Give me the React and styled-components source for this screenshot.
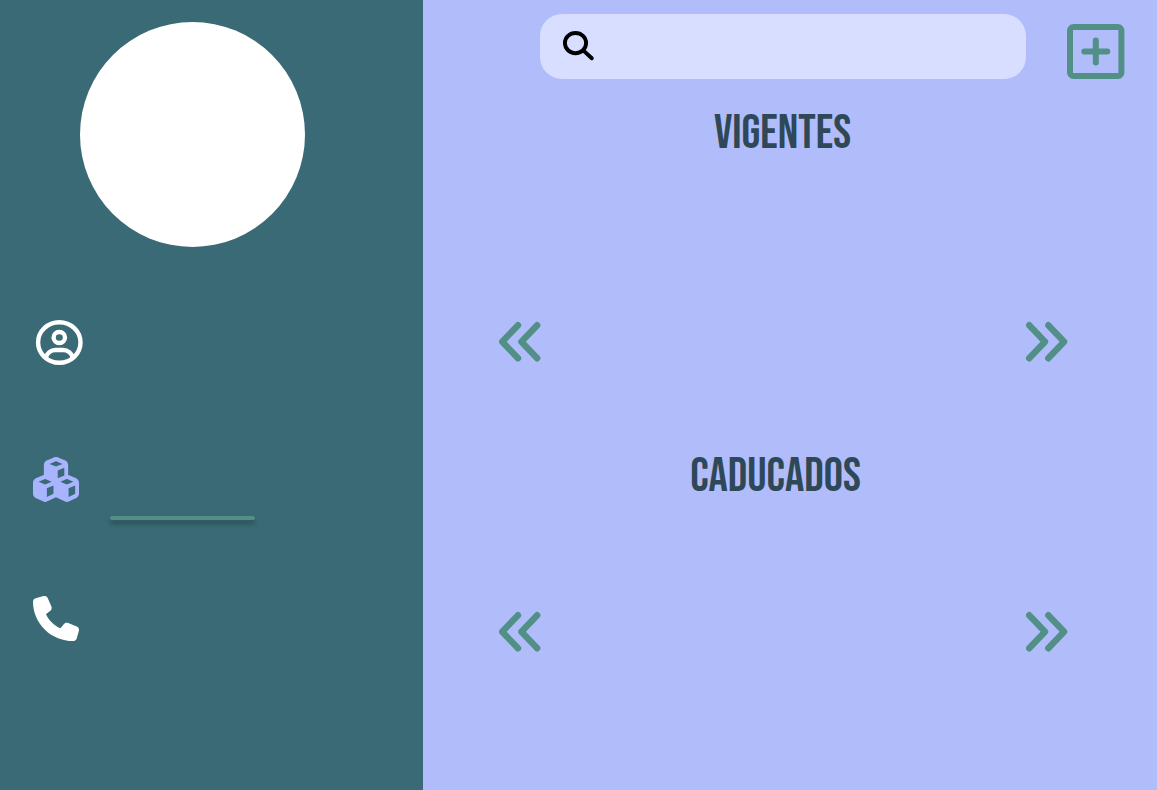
import React from "react";
import styled, { createGlobalStyle } from "styled-components";
import { FaCubes, FaPhone } from "react-icons/fa6";

const GlobalStyle = createGlobalStyle`
  * { box-sizing: border-box; }
  body {
    margin: 0;
    background: #b1bcfb;
    font-family: "Bebas Neue", "Liberation Sans Narrow", "Liberation Sans", sans-serif;
  }
`;

const Page = styled.div`
  display: grid;
  grid-template-columns: 423px minmax(0, 1fr);
  min-height: 100vh;
`;

const Sidebar = styled.aside`
  background: #396a75;
  padding: 22px 33px;
`;

const Avatar = styled.div`
  width: 225px;
  height: 225px;
  margin-left: 47px;
  border-radius: 50%;
  background: #fff;
`;

const Nav = styled.nav`
  display: flex;
  flex-direction: column;
  gap: 76px;
  margin-top: 71px;
`;

const NavLink = styled.a`
  display: flex;
  align-items: flex-start;
  gap: 31px;
  height: 63px;
  color: ${(p) => (p.$active ? "#a9b4ff" : "#fff")};

  svg {
    display: block;
    flex: none;
  }
`;

const CubesIcon = styled(FaCubes)`
  width: 46px;
  height: 45px;
`;

const PhoneIcon = styled(FaPhone)`
  width: 46px;
  height: 45px;
`;

const ActiveBar = styled.span`
  align-self: flex-end;
  width: 145px;
  height: 4px;
  border-radius: 2px;
  background: #518f87;
  box-shadow: 0 4px 4px rgba(0, 0, 0, 0.25);
`;

const Main = styled.main`
  background: #b1bcfb;
`;

const Toolbar = styled.header`
  display: flex;
  align-items: center;
  gap: 41px;
  padding: 14px 32px 0 117px;
`;

const SearchBox = styled.label`
  display: flex;
  align-items: center;
  gap: 16px;
  flex: 1;
  min-width: 0;
  height: 65px;
  padding: 0 22px;
  border-radius: 22px;
  background: #d8deff;

  svg { flex: none; }
`;

const SearchInput = styled.input`
  flex: 1;
  min-width: 0;
  height: 40px;
  border: 0;
  outline: 0;
  background: transparent;
  font: inherit;
  font-size: 24px;
  color: #2f4858;
`;

const IconButton = styled.button`
  display: block;
  flex: none;
  padding: 0;
  border: 0;
  background: none;
  color: #518f87;
  cursor: pointer;

  svg { display: block; }
`;

const AddButton = styled(IconButton)`
  align-self: flex-end;
`;

const Section = styled.section`
  display: flex;
  flex-direction: column;
  gap: ${(p) => p.$gap}px;
  padding: 26px 89px 59px 76px;
`;

const Title = styled.h2`
  margin: 0;
  padding-right: ${(p) => p.$inset}px;
  font-size: 48px;
  line-height: 58px;
  font-weight: 400;
  text-align: center;
  color: #2f4858;
`;

const Carousel = styled.div`
  display: flex;
  justify-content: space-between;
`;

const stroke = {
  fill: "none",
  stroke: "currentColor",
  strokeLinecap: "round",
  strokeLinejoin: "round",
};

function ProfileIcon() {
  return (
    <svg width="54" height="48" viewBox="0 0 54 48" {...stroke} strokeWidth="4.4" aria-hidden="true">
      <ellipse cx="26.3" cy="24.5" rx="21.2" ry="20.3" />
      <ellipse cx="26.3" cy="19.5" rx="5.7" ry="5.5" />
      <path d="M13 39C14.2 35.5 17.5 32 22.5 32H30.1C35 32 38.4 35.5 39.6 39" />
    </svg>
  );
}

function SearchIcon() {
  return (
    <svg width="33" height="32" viewBox="0 0 33 32" {...stroke} strokeWidth="3.9" aria-hidden="true">
      <ellipse cx="13.5" cy="12.1" rx="10.6" ry="10.1" />
      <path d="M21.5 19.6L29.8 27.3" />
    </svg>
  );
}

function AddIcon() {
  return (
    <svg width="58" height="55" viewBox="0 0 58 55" {...stroke} strokeWidth="6" aria-hidden="true">
      <rect x="3" y="3" width="51.4" height="49" rx="3.5" />
      <path d="M17.3 27.4H40.3M28.8 16.5V38.4" />
    </svg>
  );
}

function ArrowIcon({ forward }) {
  return (
    <svg width="42" height="42" viewBox="0 0 42 42" {...stroke} strokeWidth="6.4" aria-hidden="true">
      <path
        d={
          forward
            ? "M3.2 4.2L19 20.7L3.2 37.3M22.3 4.2L38.1 20.7L22.3 37.3"
            : "M19 4.2L3.2 20.7L19 37.3M38.2 4.2L22.4 20.7L38.2 37.3"
        }
      />
    </svg>
  );
}

function ProductSection({ title, gap, inset }) {
  return (
    <Section $gap={gap} aria-label={title}>
      <Title $inset={inset}>{title}</Title>
      <Carousel>
        <IconButton type="button" aria-label="Anterior"><ArrowIcon /></IconButton>
        <IconButton type="button" aria-label="Siguiente"><ArrowIcon forward /></IconButton>
      </Carousel>
    </Section>
  );
}

export default function App() {
  return (
    <>
      <GlobalStyle />
      <Page>
        <Sidebar>
          <Avatar />
          <Nav>
            <NavLink href="#perfil" aria-label="Perfil"><ProfileIcon /></NavLink>
            <NavLink href="#productos" aria-label="Productos" $active>
              <CubesIcon preserveAspectRatio="none" />
              <ActiveBar />
            </NavLink>
            <NavLink href="#contacto" aria-label="Contacto">
              <PhoneIcon preserveAspectRatio="none" />
            </NavLink>
          </Nav>
        </Sidebar>
        <Main>
          <Toolbar>
            <SearchBox>
              <SearchIcon />
              <SearchInput type="text" aria-label="Buscar" />
            </SearchBox>
            <AddButton type="button" aria-label="Agregar"><AddIcon /></AddButton>
          </Toolbar>
          <ProductSection title="VIGENTES" gap={158} inset={2} />
          <ProductSection title="CADUCADOS" gap={105} inset={16} />
        </Main>
      </Page>
    </>
  );
}
